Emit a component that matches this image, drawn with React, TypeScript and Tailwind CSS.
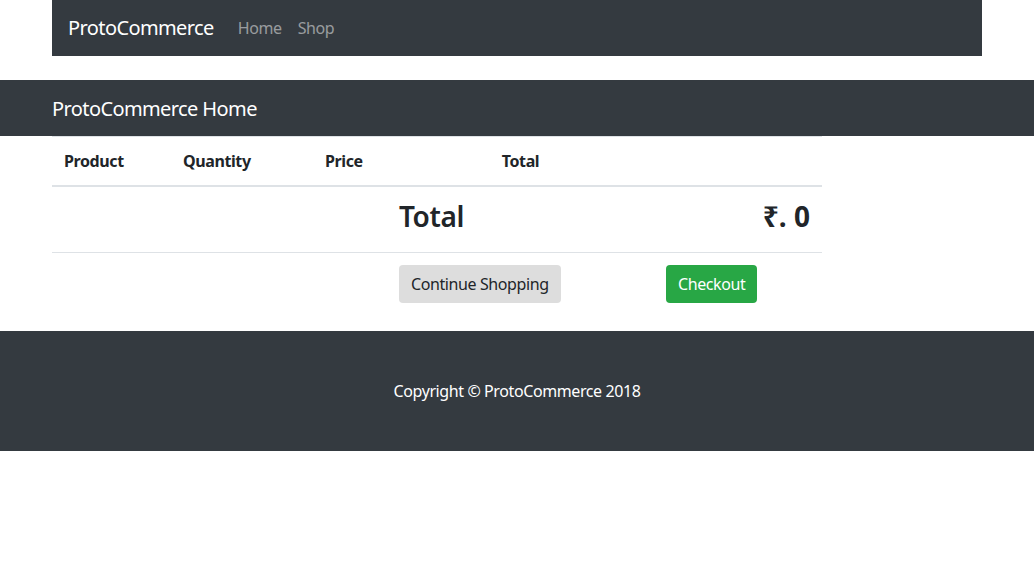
import React from "react";

export default function App() {
  return (
    <div className="min-h-[572px] bg-white text-[#212529] text-[16px] leading-[24px] tracking-[-0.025em]" style={{ fontFamily: '"Noto Sans", "Open Sans", sans-serif' }}>
      <nav className="mx-auto flex h-14 w-[930px] items-center bg-[#343a40] px-4">
        <span className="mr-4 text-[20px] leading-[30px] text-white tracking-[-0.03em]">ProtoCommerce</span>
        <a className="px-2 text-[rgba(255,255,255,0.5)]">Home</a>
        <a className="px-2 text-[rgba(255,255,255,0.5)]">Shop</a>
      </nav>

      <div className="mt-6 flex h-14 items-center bg-[#343a40]">
        <div className="mx-auto w-[930px] pt-[2px] text-[20px] text-white tracking-[-0.03em]">ProtoCommerce Home</div>
      </div>

      <div className="mx-auto mb-4 w-[930px]">
        <div className="w-[770px]">
          <div className="grid grid-cols-[119px_142px_74px_267px_168px] border-t border-b-2 border-[#dee2e6] font-bold">
            <div className="p-3">Product</div>
            <div className="p-3">Quantity</div>
            <div className="p-3">Price</div>
            <div className="p-3 text-center">Total</div>
            <div className="p-3"></div>
          </div>
          <div className="grid grid-cols-[119px_142px_74px_267px_168px] border-b border-[#dee2e6]">
            <div className="p-3"></div>
            <div className="p-3"></div>
            <div className="p-3"></div>
            <div className="px-3 pt-[13px] pb-[11px]">
              <h3 className="mb-2 text-[28px] font-semibold leading-[33px]">Total</h3>
            </div>
            <div className="px-3 pt-[13px] pb-[11px] text-right">
              <h3 className="mb-2 text-[28px] font-bold leading-[33px] tracking-normal">₹. 0</h3>
            </div>
          </div>
          <div className="grid grid-cols-[119px_142px_74px_267px_168px]">
            <div className="p-3"></div>
            <div className="p-3"></div>
            <div className="p-3"></div>
            <div className="p-3">
              <button className="h-[38px] rounded bg-[#dddddd] px-3 text-[#212529]">Continue Shopping</button>
            </div>
            <div className="p-3">
              <button className="h-[38px] rounded bg-[#28a745] px-3 text-white">Checkout</button>
            </div>
          </div>
        </div>
      </div>

      <footer className="bg-[#343a40] py-12 text-center text-white">
        Copyright © ProtoCommerce 2018
      </footer>
    </div>
  );
}
